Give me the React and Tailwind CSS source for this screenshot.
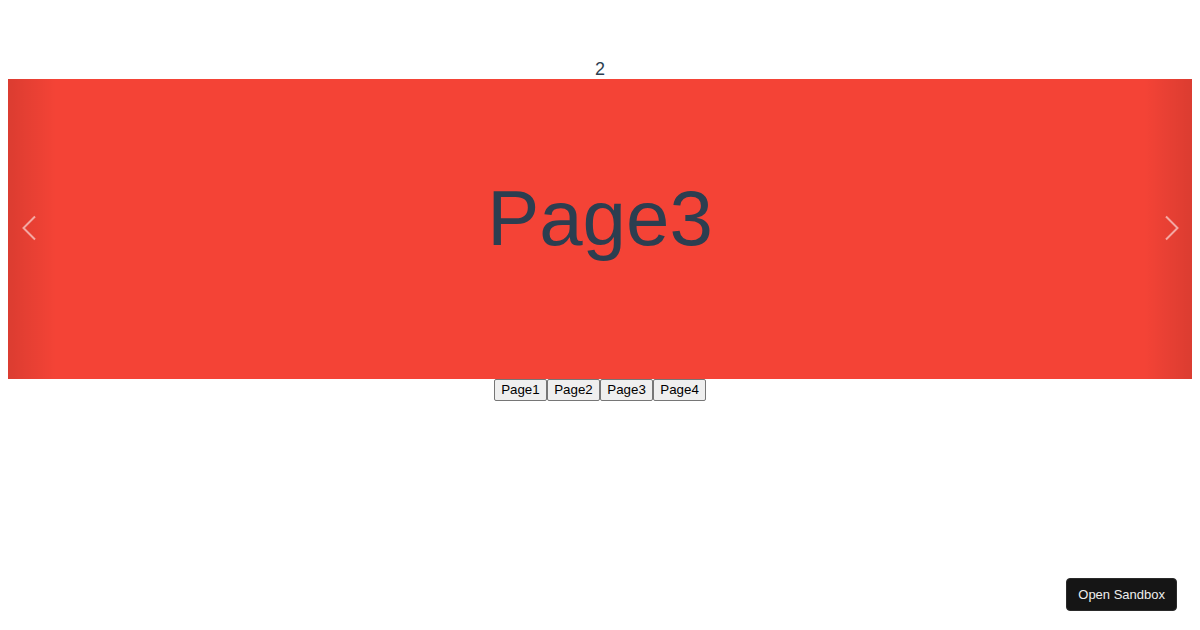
import React, { useState } from 'react';

const pages = ["Page1", "Page2", "Page3", "Page4"];

const Chevron = ({ dir }) => (
    <svg width="16" height="26" viewBox="0 0 16 26" fill="none">
        <path
            d={dir === "left" ? "M14 1.5 L2.5 13 L14 24.5" : "M2 1.5 L13.5 13 L2 24.5"}
            stroke="rgba(255,255,255,0.55)"
            strokeWidth="2"
        />
    </svg>
);

const App = () => {
    const [current, setCurrent] = useState(2);

    return (
        <div className="min-h-[630px] bg-white p-2 pt-[60px] font-['Liberation_Sans',Arial,sans-serif] text-[#2c3e50]">
            {/* current index */}
            <div className="text-center text-[18px] leading-[19px]">{current}</div>

            {/* carousel */}
            <div className="relative flex h-[300px] items-center justify-center bg-[#f44336]">
                <div className="absolute inset-y-0 left-0 w-[48px] bg-gradient-to-r from-[rgba(0,0,0,0.1)] to-transparent" />
                <div className="absolute inset-y-0 right-0 w-[48px] bg-gradient-to-l from-[rgba(0,0,0,0.1)] to-transparent" />
                <div className="pb-[22px] text-[78px] leading-[90px]">{pages[current]}</div>

                {/* arrows overlay */}
                <div className="absolute inset-0 flex items-center justify-between pb-[3px] pl-[13px] pr-[12px]">
                    <button className="p-0" onClick={() => setCurrent((current + 3) % 4)}>
                        <Chevron dir="left" />
                    </button>
                    <button className="p-0" onClick={() => setCurrent((current + 1) % 4)}>
                        <Chevron dir="right" />
                    </button>
                </div>
            </div>

            {/* page buttons */}
            <div className="flex justify-center">
                {pages.map((p, i) => (
                    <button
                        key={p}
                        onClick={() => setCurrent(i)}
                        className="rounded-[2px] border border-[#767676] bg-[#efefef] px-[6.25px] py-[1px] text-[13.33px] leading-[18px] text-black"
                    >
                        {p}
                    </button>
                ))}
            </div>

            <button className="fixed bottom-[19px] right-[23px] h-[33px] rounded-[4px] border border-[#2a2a2a] bg-[#151515] px-[11px] text-[13px] text-[#eeeeee]">
                Open Sandbox
            </button>
        </div>
    );
};

export default App;
